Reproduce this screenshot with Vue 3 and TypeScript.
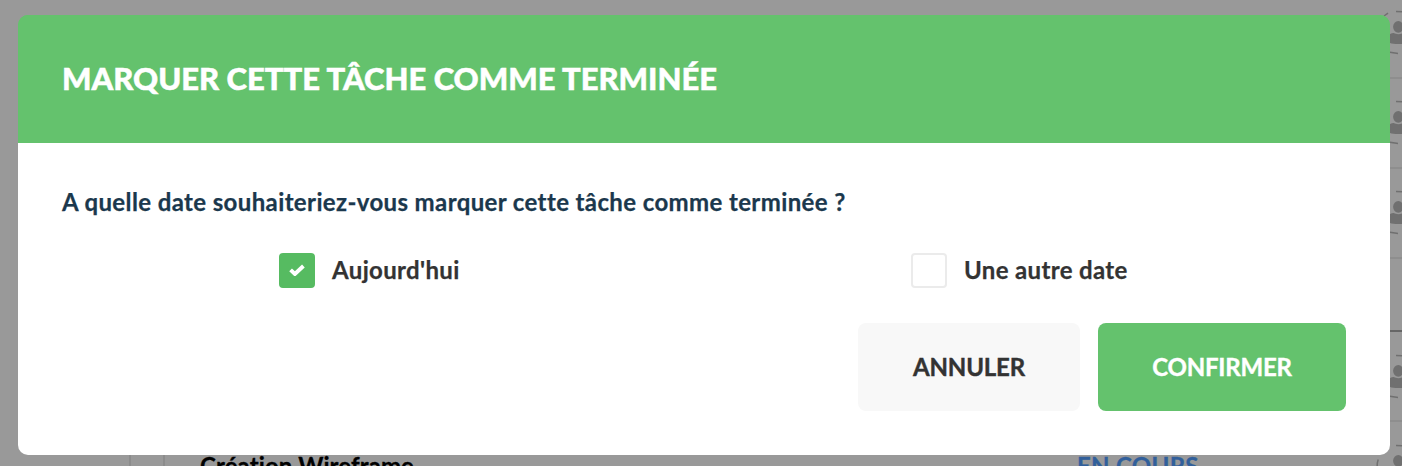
<script setup lang="ts">
import { ref } from 'vue'

interface Row { id: number; kind: 'task' | 'heading'; title?: string; status?: string }

const rows: Row[] = [
  { id: 1, kind: 'task' },
  { id: 2, kind: 'task' },
  { id: 3, kind: 'task' },
  { id: 4, kind: 'heading' },
  { id: 5, kind: 'task' },
  { id: 6, kind: 'task', title: 'Création Wireframe', status: 'EN COURS' },
]

const options = [
  { value: 'today', label: "Aujourd'hui" },
  { value: 'other', label: 'Une autre date' },
]
const selected = ref('today')
</script>

<template>
  <div class="screen">
    <div class="board">
      <div v-for="row in rows" :key="row.id" :class="['row', row.kind]">
        <template v-if="row.kind === 'task'">
          <span class="row-check"></span>
          <span class="row-title">{{ row.title }}</span>
          <span class="row-status">{{ row.status }}</span>
          <svg class="avatar" viewBox="0 0 46 46" width="46" height="46">
            <path d="M21 2.500L29 2.700M9 7l4-2.800M2.500 27C2 24 2 20 3.200 16.500M15 43.200l8 1.300" fill="none" stroke="#707070" stroke-width="1.500" />
            <ellipse cx="23.300" cy="17.800" rx="5.200" ry="5.900" fill="#707070" />
            <path d="M18.500 24c2.800 1.500 6.800 1.500 9.600 0 4.400.4 6.400 3.500 6.400 7 0 2.900-4 4-11.200 4s-11.200-1.100-11.200-4c0-3.500 2-6.600 6.400-7z" fill="#707070" />
          </svg>
        </template>
      </div>
    </div>

    <section class="modal" role="dialog">
      <header class="modal-head"><h1>MARQUER CETTE TÂCHE COMME TERMINÉE</h1></header>
      <div class="modal-body">
        <p class="question">A quelle date souhaiteriez-vous marquer cette tâche comme terminée ?</p>
        <div class="options">
          <label v-for="o in options" :key="o.value" :class="['option', o.value]" @click="selected = o.value">
            <span :class="['box', { on: selected === o.value }]">
              <svg v-if="selected === o.value" viewBox="0 0 16 12" width="16" height="12">
                <path d="M1.600 5.800L5.900 10L14.400 2" fill="none" stroke="#fff" stroke-width="3.900" />
              </svg>
            </span>
            <span class="option-label">{{ o.label }}</span>
          </label>
        </div>
        <footer class="actions">
          <button class="btn cancel" type="button">ANNULER</button>
          <button class="btn confirm" type="button">CONFIRMER</button>
        </footer>
      </div>
    </section>
  </div>
</template>

<style>
body { margin: 0; overflow: hidden; }
</style>

<style scoped>
* { box-sizing: border-box; }
.screen {
  position: relative;
  height: 466px;
  padding: 15px 12px 0 18px;
  overflow: hidden;
  background: #999;
  font-family: Lato, "Liberation Sans", sans-serif;
  font-variant-ligatures: none;
}
.board { position: absolute; top: -11px; left: 40px; width: 1385px; }
.row { display: flex; height: 90px; border-bottom: 2px solid #8e8e8e; }
.row.heading { height: 73px; border-bottom-color: #666; }
.row-check { width: 36px; height: 36px; margin: 27px 35px 0 89px; border: 2px solid #8c8c8c; border-radius: 4px; }
.row-title { width: 877px; margin-top: 27px; color: #000; font-size: 24px; line-height: 34px; font-weight: 700; letter-spacing: 0.1px; -webkit-text-stroke: 0.3px; }
.row-status { width: 298px; margin-top: 27px; color: #315f9b; font-size: 24px; line-height: 34px; font-weight: 700; letter-spacing: 0.3px; -webkit-text-stroke: 0.3px; }
.avatar { flex: none; margin-top: 20px; }
.heading ~ .row .avatar { margin-top: 21px; }

.modal { position: relative; height: 440px; border-radius: 10px; background: #fff; }
.modal-head { display: flex; align-items: center; height: 128px; padding: 0 44px 3px; border-radius: 10px 10px 0 0; background: #64c26d; }
.modal:has(.modal-head) { background: linear-gradient(#64c26d 128px, #fff 128px); }
h1 { margin: 0; color: #fff; font-size: 31px; line-height: 40px; font-weight: 900; white-space: nowrap; -webkit-text-stroke: 0.5px #fff; }
.modal-body { padding: 41px 44px 0; }
.question { margin: 0; color: #1b384d; font-size: 24px; line-height: 36px; font-weight: 700; letter-spacing: 0.38px; white-space: nowrap; -webkit-text-stroke: 0.25px; }
.options { display: grid; grid-template-columns: 632px 1fr; margin-top: 33px; padding-left: 217px; }
.option { display: flex; align-items: center; height: 35px; cursor: pointer; }
.box { display: flex; align-items: center; justify-content: center; width: 36px; height: 35px; margin-right: 17px; border: 2px solid #ebebeb; border-radius: 4px; }
.box.on { padding-bottom: 1px; border-color: #56bb61; background: #56bb61; }
.option-label { padding-bottom: 2px; color: #333; font-size: 24px; line-height: 34px; font-weight: 700; letter-spacing: 0.35px; white-space: nowrap; -webkit-text-stroke: 0.25px; }
.actions { display: flex; justify-content: flex-end; gap: 18px; margin-top: 35px; }
.btn { height: 88px; padding: 0; border: 0; border-radius: 8px; font: 700 24px/34px Lato, "Liberation Sans", sans-serif; letter-spacing: -0.2px; -webkit-text-stroke: 0.4px; }
.cancel { width: 222px; background: #f8f8f8; color: #333; }
.confirm { width: 248px; background: #64c26d; color: #fff; }
</style>
